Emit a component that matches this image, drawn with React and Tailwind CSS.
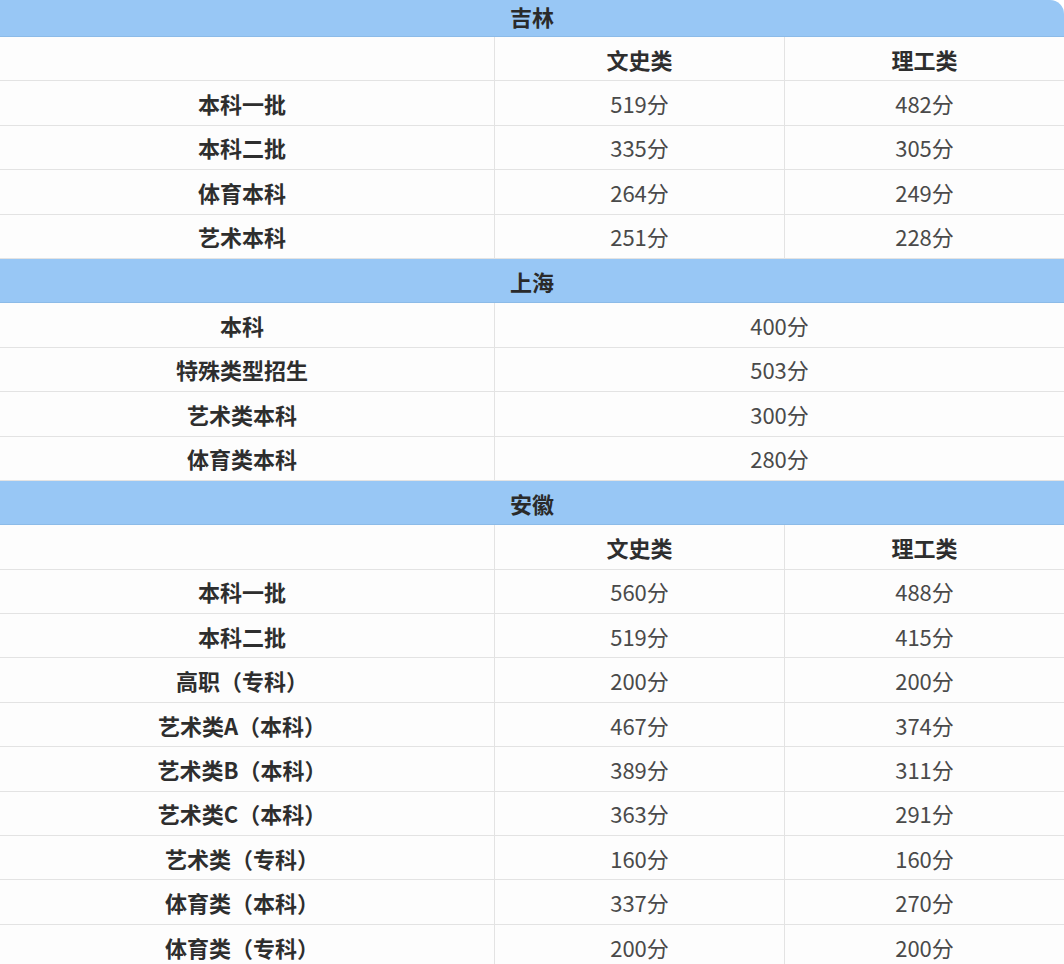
import React from 'react'

const sections = [
  {
    name: '吉林',
    twoCol: true,
    rows: [
      ['本科一批', '519分', '482分'],
      ['本科二批', '335分', '305分'],
      ['体育本科', '264分', '249分'],
      ['艺术本科', '251分', '228分'],
    ],
  },
  {
    name: '上海',
    twoCol: false,
    rows: [
      ['本科', '400分'],
      ['特殊类型招生', '503分'],
      ['艺术类本科', '300分'],
      ['体育类本科', '280分'],
    ],
  },
  {
    name: '安徽',
    twoCol: true,
    rows: [
      ['本科一批', '560分', '488分'],
      ['本科二批', '519分', '415分'],
      ['高职（专科）', '200分', '200分'],
      ['艺术类A（本科）', '467分', '374分'],
      ['艺术类B（本科）', '389分', '311分'],
      ['艺术类C（本科）', '363分', '291分'],
      ['艺术类（专科）', '160分', '160分'],
      ['体育类（本科）', '337分', '270分'],
      ['体育类（专科）', '200分', '200分'],
    ],
  },
]

function Cell({ children, bold, last, span, first }) {
  return (
    <div
      className={
        'flex items-center justify-center ' +
        (span ? 'col-span-2 ' : '') +
        (first ? 'pr-[10px] ' : '') +
        (last ? '' : 'border-r border-[#e3e3e3] ') +
        (bold ? 'font-bold text-[#2e2e2e]' : 'text-[#4a4a4a]')
      }
    >
      {children}
    </div>
  )
}

function Row({ cells }) {
  return (
    <div className="grid grid-cols-[495px_290px_1fr] h-[44.4px] border-b border-[#e3e3e3] bg-[#fdfdfd]">
      {cells}
    </div>
  )
}

export default function App() {
  return (
    <div
      className="w-[1064px] h-[964px] overflow-hidden bg-white text-[22px] leading-none"
      style={{ fontFamily: '"Noto Sans CJK SC", "Noto Sans", sans-serif' }}
    >
      {sections.map((sec, i) => (
        <div key={sec.name}>
          <div
            className={
              'flex justify-center bg-[#98c7f5] font-bold text-[#2a2a2a] border-b border-[#8cbbe8] ' +
              (i === 0 ? 'h-[37px] items-center pb-[4px] rounded-tr-[14px]' : 'h-[44.4px] items-center')
            }
          >
            {sec.name}
          </div>
          {sec.twoCol && (
            <Row
              cells={
                <>
                  <Cell bold first />
                  <Cell bold>文史类</Cell>
                  <Cell bold last>理工类</Cell>
                </>
              }
            />
          )}
          {sec.rows.map((r) => (
            <Row
              key={r[0]}
              cells={
                sec.twoCol ? (
                  <>
                    <Cell bold first>{r[0]}</Cell>
                    <Cell>{r[1]}</Cell>
                    <Cell last>{r[2]}</Cell>
                  </>
                ) : (
                  <>
                    <Cell bold first>{r[0]}</Cell>
                    <Cell span last>{r[1]}</Cell>
                  </>
                )
              }
            />
          ))}
        </div>
      ))}
    </div>
  )
}
